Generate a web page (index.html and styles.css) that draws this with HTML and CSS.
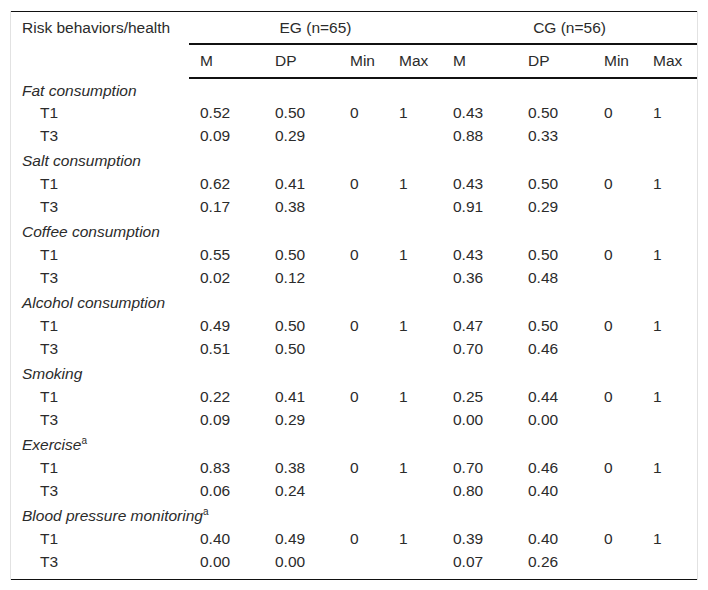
FILE: index.html
```html
<!DOCTYPE html>
<html>
<head>
<meta charset="utf-8">
<link rel="stylesheet" href="styles.css">
</head>
<body>
<div class="wrap">
<table class="data">
<colgroup>
<col class="c-label"><col class="c-m"><col class="c-dp"><col class="c-min"><col class="c-max"><col class="c-m"><col class="c-dp2"><col class="c-min"><col class="c-max2">
</colgroup>
<thead>
<tr class="h1">
<th class="lab" rowspan="2">Risk behaviors/health</th>
<th class="grp" colspan="4">EG (n=65)</th>
<th class="grp" colspan="4">CG (n=56)</th>
</tr>
<tr class="h2">
<th>M</th><th>DP</th><th>Min</th><th>Max</th><th>M</th><th>DP</th><th>Min</th><th>Max</th>
</tr>
</thead>
<tbody>
<tr><td class="cat" colspan="9">Fat consumption</td></tr>
<tr><td class="sub">T1</td><td>0.52</td><td>0.50</td><td>0</td><td>1</td><td>0.43</td><td>0.50</td><td>0</td><td>1</td></tr>
<tr class="t3"><td class="sub">T3</td><td>0.09</td><td>0.29</td><td></td><td></td><td>0.88</td><td>0.33</td><td></td><td></td></tr>
<tr><td class="cat" colspan="9">Salt consumption</td></tr>
<tr><td class="sub">T1</td><td>0.62</td><td>0.41</td><td>0</td><td>1</td><td>0.43</td><td>0.50</td><td>0</td><td>1</td></tr>
<tr class="t3"><td class="sub">T3</td><td>0.17</td><td>0.38</td><td></td><td></td><td>0.91</td><td>0.29</td><td></td><td></td></tr>
<tr><td class="cat" colspan="9">Coffee consumption</td></tr>
<tr><td class="sub">T1</td><td>0.55</td><td>0.50</td><td>0</td><td>1</td><td>0.43</td><td>0.50</td><td>0</td><td>1</td></tr>
<tr class="t3"><td class="sub">T3</td><td>0.02</td><td>0.12</td><td></td><td></td><td>0.36</td><td>0.48</td><td></td><td></td></tr>
<tr><td class="cat" colspan="9">Alcohol consumption</td></tr>
<tr><td class="sub">T1</td><td>0.49</td><td>0.50</td><td>0</td><td>1</td><td>0.47</td><td>0.50</td><td>0</td><td>1</td></tr>
<tr class="t3"><td class="sub">T3</td><td>0.51</td><td>0.50</td><td></td><td></td><td>0.70</td><td>0.46</td><td></td><td></td></tr>
<tr><td class="cat" colspan="9">Smoking</td></tr>
<tr><td class="sub">T1</td><td>0.22</td><td>0.41</td><td>0</td><td>1</td><td>0.25</td><td>0.44</td><td>0</td><td>1</td></tr>
<tr class="t3"><td class="sub">T3</td><td>0.09</td><td>0.29</td><td></td><td></td><td>0.00</td><td>0.00</td><td></td><td></td></tr>
<tr><td class="cat" colspan="9">Exercise<sup>a</sup></td></tr>
<tr><td class="sub">T1</td><td>0.83</td><td>0.38</td><td>0</td><td>1</td><td>0.70</td><td>0.46</td><td>0</td><td>1</td></tr>
<tr class="t3"><td class="sub">T3</td><td>0.06</td><td>0.24</td><td></td><td></td><td>0.80</td><td>0.40</td><td></td><td></td></tr>
<tr><td class="cat" colspan="9">Blood pressure monitoring<sup>a</sup></td></tr>
<tr><td class="sub">T1</td><td>0.40</td><td>0.49</td><td>0</td><td>1</td><td>0.39</td><td>0.40</td><td>0</td><td>1</td></tr>
<tr class="t3 end"><td class="sub">T3</td><td>0.00</td><td>0.00</td><td></td><td></td><td>0.07</td><td>0.26</td><td></td><td></td></tr>
</tbody>
</table>
</div>
</body>
</html>
```
FILE: styles.css
```css
html, body {
  margin: 0;
  padding: 0;
  background: #fff;
}
body {
  font-family: "Liberation Sans", Arial, sans-serif;
  font-size: 15.5px;
  color: #2b2b2b;
}
.wrap {
  margin: 11px 10px 0 10px;
  width: 686px;
  border-left: 1px solid #e2e2e2;
  border-right: 1px solid #e2e2e2;
}
.data {
  width: 686px;
  border-collapse: collapse;
  table-layout: fixed;
  border-top: 1px solid #111;
  border-bottom: 1px solid #111;
}
.c-label { width: 178px; }
.c-m { width: 75px; }
.c-dp { width: 75px; }
.c-dp2 { width: 76px; }
.c-min { width: 49px; }
.c-max { width: 54px; }
.c-max2 { width: 55px; }
th, td {
  text-align: left;
  font-weight: normal;
  padding: 0 0 0 11px;
  white-space: nowrap;
  line-height: 18px;
}
.h1 th {
  height: 31px;
}
.h1 th.lab {
  vertical-align: top;
  padding-top: 7px;
}
.h1 .grp {
  text-align: center;
  padding: 0;
  border-bottom: 2px solid #111;
}
.h2 th {
  height: 32px;
  border-bottom: 2px solid #111;
}
tbody td {
  height: 23px;
  padding-top: 0;
  padding-bottom: 0;
  vertical-align: top;
  padding-top: 2.5px;
  box-sizing: border-box;
}
tbody tr.t3 td {
  height: 25px;
}
tbody tr.end td {
  height: 29px;
}
td.cat {
  font-style: italic;
}
td.sub {
  padding-left: 29px;
}
sup {
  font-style: normal;
  font-size: 10px;
  line-height: 0;
  vertical-align: 6px;
}
```
